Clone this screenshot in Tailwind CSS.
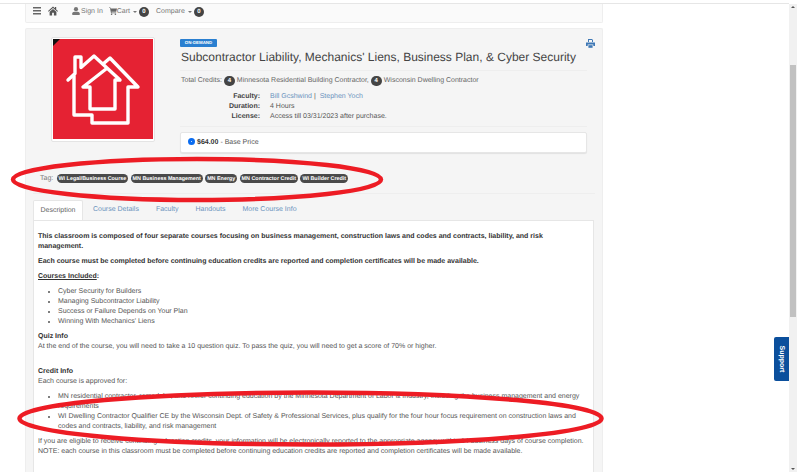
<!DOCTYPE html>
<html lang="en">
<head>
<meta charset="UTF-8">
<title>Subcontractor Liability</title>
<script src="https://cdn.jsdelivr.net/npm/@tailwindcss/browser@4"></script>
</head>
<body class="relative h-[472px] w-[797px] overflow-hidden bg-white font-['Liberation_Sans',sans-serif] text-[7px] leading-[10px] text-[#555] [text-rendering:geometricPrecision]">

<!-- page -->
<div class="mt-[3px] h-[469px] w-[789px] border-t border-[#e6e6e6] pl-[25px]">
  <div class="w-[578px]">
    <!-- nav -->
    <nav class="flex h-[19px] items-start rounded-b-[2px] border border-t-0 border-[#eee] bg-[#fafafa] pl-[7px] pt-[2px] text-[#777]">
      <svg class="mt-[1px] h-[8px] w-[8px]" viewBox="0 0 8 8" fill="#666"><rect y="0" width="8" height="1.5"/><rect y="3" width="8" height="1.5"/><rect y="6" width="8" height="1.5"/></svg>
      <svg class="ml-[7px] h-[10px] w-[10px]" viewBox="0 0 10 10" fill="#555"><path d="M5 .5 0 5l.6.7L5 1.9l4.4 3.8.6-.7L8.2 3.4V1H6.9v1.2z"/><path d="M5 2.9 1.6 5.8V9.6h2.5V6.8h1.8v2.8h2.5V5.8z"/></svg>
      <svg class="ml-[14px] mt-[1px] h-[8px] w-[8px]" viewBox="0 0 8 8" fill="#777"><circle cx="4" cy="2.2" r="2.1"/><path d="M.3 8V6.3C.3 5 2 4.7 4 4.7s3.7.3 3.7 1.6V8z"/></svg>
      <span class="ml-[1px] mt-px">Sign In</span>
      <svg class="ml-[6px] mt-[1px] h-[8px] w-[8px]" viewBox="0 0 8 8" fill="#666"><path d="M0 .4h1.4l.3 1H8L7.2 4.8H2.4l.2.8h4.6v.6H2L1 1H0z"/><circle cx="2.6" cy="7.2" r=".8"/><circle cx="6.4" cy="7.2" r=".8"/></svg>
      <span class="mt-px">Cart</span>
      <span class="ml-[3px] mt-[5px] h-0 w-0 border-x-[2px] border-t-[2px] border-x-transparent border-t-[#777]"></span>
      <span class="ml-[2px] mt-[1px] flex h-[10px] w-[10px] items-center justify-center rounded-full bg-[#444] text-[6px] font-bold text-white">0</span>
      <span class="ml-[7px] mt-px">Compare</span>
      <span class="ml-[3px] mt-[5px] h-0 w-0 border-x-[2px] border-t-[2px] border-x-transparent border-t-[#777]"></span>
      <span class="ml-[2px] mt-[1px] flex h-[10px] w-[10px] items-center justify-center rounded-full bg-[#444] text-[6px] font-bold text-white">0</span>
    </nav>

    <!-- main card -->
    <main class="mt-[5px] h-[446px] rounded-[2px] border border-b-0 border-[#eee] bg-[#f5f5f5] px-[7px]">
      <div class="relative flex h-[133px]">
        <!-- logo -->
        <div class="ml-[18px] mt-[8px] h-[105px] w-[104px] shrink-0 rounded-[2px] border border-[#e4e4e4] bg-white p-px">
          <div class="relative h-[100px] w-[100px] overflow-hidden bg-[#e52233]">
            <span class="absolute left-0 top-0 h-0 w-0 border-r-[7px] border-t-[7px] border-r-transparent border-t-[#111]"></span>
            <svg class="absolute left-0 top-0 h-[100px] w-[100px]" viewBox="0 0 100 100" fill="none" stroke="#fff" stroke-width="3.4" stroke-linejoin="round" stroke-linecap="round">
              <path d="M15 41 22 34.500V18H28V28.500L41 17 67 41H62V70H37V48H30L53 30"/>
              <path d="M50 25 57 19 85 48H75V84H39V76H21V37"/>
            </svg>
          </div>
        </div>
        <!-- details -->
        <div class="ml-[25px] w-[407px] shrink-0 pt-[10px]">
          <span class="block h-[8px] w-[37px] rounded-[1px] bg-[#2a7fd0] text-center text-[4.4px] font-bold leading-[8px] text-white">ON-DEMAND</span>
          <h1 class="mt-[2px] h-[22px] whitespace-nowrap border-b border-[#eee] pl-[1px] text-[12px] leading-[17px] text-[#444]">Subcontractor Liability, Mechanics' Liens, Business Plan, &amp; Cyber Security</h1>
          <p class="mt-[5px] flex h-[10px] items-center pl-[1px] text-[#666]">Total Credits:<span class="mx-[2px] flex h-[10px] w-[11px] items-center justify-center rounded-full bg-[#444] text-[6px] font-bold text-white">4</span>Minnesota Residential Building Contractor,<span class="mx-[2px] flex h-[10px] w-[11px] items-center justify-center rounded-full bg-[#444] text-[6px] font-bold text-white">4</span>Wisconsin Dwelling Contractor</p>
          <dl class="mt-[6px] grid grid-cols-[80px_1fr] gap-x-[10px] border-b border-[#eee] pb-[4px]">
            <dt class="text-right font-bold text-[#444]">Faculty:</dt>
            <dd><a class="text-[#6b93bd]">Bill Gcshwind</a> <span class="text-[#555]">|</span> &nbsp;<a class="text-[#6b93bd]">Stephen Yoch</a></dd>
            <dt class="text-right font-bold text-[#444]">Duration:</dt>
            <dd>4 Hours</dd>
            <dt class="text-right font-bold text-[#444]">License:</dt>
            <dd>Access till 03/31/2023 after purchase.</dd>
          </dl>
          <div class="mt-[5px] flex h-[21px] items-center rounded-[2px] border border-[#e6e6e6] bg-white pl-[7px] shadow-[0_1px_1px_rgba(0,0,0,0.08)]">
            <span class="mb-[2px] h-[7px] w-[7px] rounded-full border-[3px] border-[#0a6cf0] bg-white"></span>
            <b class="ml-[2px] text-[#333]">$64.00</b><span class="ml-[2px]">- Base Price</span>
          </div>
        </div>
        <!-- print icon -->
        <svg class="absolute left-[553px] top-[10px] h-[9px] w-[9px]" viewBox="0 0 9 9" fill="#3f78b5"><path d="M2 0h4l1 1v2H6V1H3v2H2z"/><path d="M0 3.400h9V7H7.300V5.500H1.700V7H0z"/><rect x="2.400" y="6.200" width="4.200" height="2.600"/></svg>
      </div>

      <!-- tags -->
      <div class="mt-[12px] flex h-[19px] items-start gap-[2.300px] pl-[7px] text-[#777]">
        <span class="mr-[1px]">Tag:</span>
        <span class="flex h-[9px] items-center rounded-full bg-[#4a4a4a] px-[2px] text-[5.400px] font-bold text-white">WI Legal/Business Course</span>
        <span class="flex h-[9px] items-center rounded-full bg-[#4a4a4a] px-[2px] text-[5.400px] font-bold text-white">MN Business Management</span>
        <span class="flex h-[9px] items-center rounded-full bg-[#4a4a4a] px-[2px] text-[5.400px] font-bold text-white">MN Energy</span>
        <span class="flex h-[9px] items-center rounded-full bg-[#4a4a4a] px-[2px] text-[5.400px] font-bold text-white">MN Contractor Credit</span>
        <span class="flex h-[9px] items-center rounded-full bg-[#4a4a4a] px-[2px] text-[5.400px] font-bold text-white">WI Builder Credit</span>
      </div>
      <div class="border-t border-[#eee]"></div>

      <!-- tabs -->
      <div class="mt-[6px] flex h-[20px] items-center text-[#6b93bd]">
        <span class="flex h-[20px] w-[50px] items-center justify-center rounded-t-[2px] border border-b-0 border-[#e6e6e6] bg-white text-[#666]">Description</span>
        <span class="ml-[10px]">Course Details</span>
        <span class="ml-[17px]">Faculty</span>
        <span class="ml-[17px]">Handouts</span>
        <span class="ml-[17px]">More Course Info</span>
      </div>

      <!-- tab content -->
      <section class="h-[260px] w-[561px] border border-b-0 border-[#e6e6e6] bg-white pl-[4px] pr-[4px] pt-[11px]">
        <p class="pr-[10px] font-bold text-[#333]">This classroom is composed of four separate courses focusing on business management, construction laws and codes and contracts, liability, and risk management.</p>
        <p class="mt-[5px] font-bold text-[#333]">Each course must be completed before continuing education credits are reported and completion certificates will be made available.</p>
        <p class="mt-[5px] font-bold text-[#333]"><u>Courses Included</u>:</p>
        <ul class="mt-[5px] list-disc pl-[20px]">
          <li>Cyber Security for Builders</li>
          <li>Managing Subcontractor Liability</li>
          <li>Success or Failure Depends on Your Plan</li>
          <li>Winning With Mechanics' Liens</li>
        </ul>
        <p class="mt-[5px] font-bold text-[#333]">Quiz Info</p>
        <p>At the end of the course, you will need to take a 10 question quiz. To pass the quiz, you will need to get a score of 70% or higher.</p>
        <p class="mt-[15px] font-bold text-[#333]">Credit Info</p>
        <p>Each course is approved for:</p>
        <ul class="mt-[5px] list-disc pl-[20px]">
          <li>MN residential contractor, remodeler, and roofer continuing education by the Minnesota Department of Labor &amp; Industry, including the business management and energy requirements</li>
          <li>WI Dwelling Contractor Qualifier CE by the Wisconsin Dept. of Safety &amp; Professional Services, plus qualify for the four hour focus requirement on construction laws and codes and contracts, liability, and risk management</li>
        </ul>
        <p class="mt-[5px]">If you are eligible to receive continuing education credits, your information will be electronically reported to the appropriate agency within 14 business days of course completion.<br>NOTE: each course in this classroom must be completed before continuing education credits are reported and completion certificates will be made available.</p>
      </section>
    </main>
  </div>
</div>

<!-- red markup ellipses drawn over the screenshot -->
<svg class="absolute left-0 top-0 h-[472px] w-[797px]" viewBox="0 0 797 472" fill="none" stroke="#ed1c24" stroke-width="4.500">
  <ellipse cx="197" cy="179.500" rx="184" ry="20.500"/>
  <ellipse cx="310.500" cy="418.500" rx="291" ry="26"/>
</svg>

<!-- support tab -->
<div class="absolute left-[774px] top-[337px] flex h-[44px] w-[15px] items-center justify-center rounded-l-[2px] bg-[#0b4f9c]">
  <span class="rotate-90 whitespace-nowrap text-[7px] font-bold text-white">Support</span>
</div>

<!-- scrollbar -->
<div class="absolute right-0 top-[4px] flex h-[468px] w-[8px] flex-col items-center bg-[#f1f1f1]">
  <span class="mt-[2px] h-0 w-0 border-x-[2px] border-b-[2px] border-x-transparent border-b-[#555]"></span>
  <span class="mt-[57px] h-[252px] w-[6px] bg-[#c1c1c1]"></span>
  <span class="mb-[2px] mt-auto h-0 w-0 border-x-[2px] border-t-[2px] border-x-transparent border-t-[#555]"></span>
</div>
</body>
</html>
